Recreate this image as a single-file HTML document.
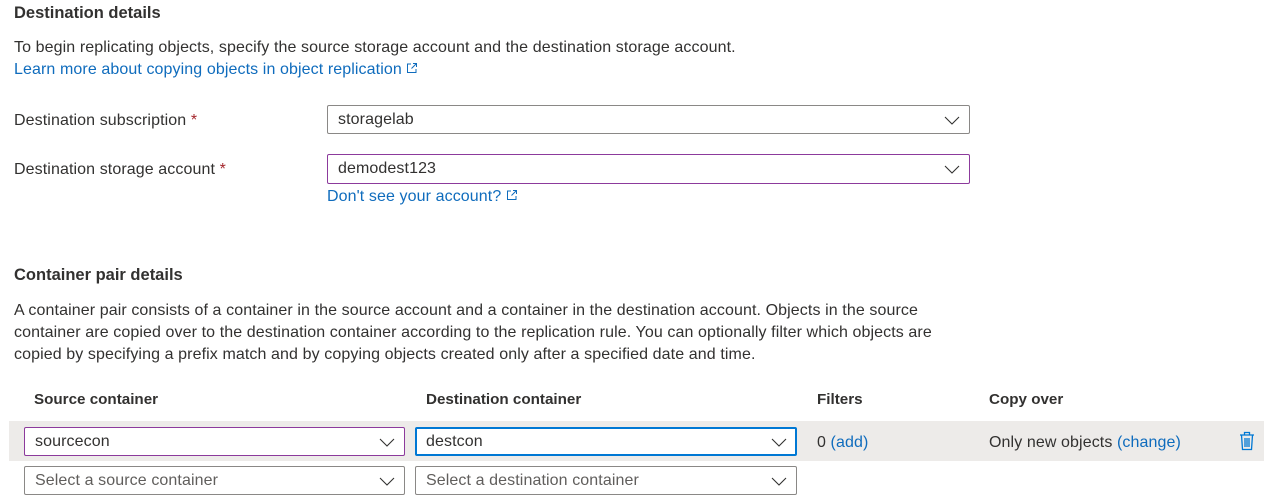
<!DOCTYPE html>
<html><head><style>
body{margin:0;width:1269px;height:498px;background:#fff;font-family:"Liberation Sans",sans-serif;color:#323130;position:relative;overflow:hidden;font-size:16px;letter-spacing:0.1px}
.a{position:absolute;white-space:nowrap;line-height:20px}
.h{font-size:16.5px;font-weight:bold;color:#323130;letter-spacing:0}
.b{font-weight:bold;font-size:15.2px;letter-spacing:0}
.l{color:#0f6cbd}
.r{color:#a4262c}
.box{position:absolute;box-sizing:border-box;border:1px solid #8a8886;border-radius:2px;background:#fff}
.box span{position:absolute;left:10px;top:50%;transform:translateY(-50%);white-space:nowrap}
.box svg{position:absolute;right:9px;top:50%;margin-top:-6px}
.p{border-color:#8c3a9c}
.ph{color:#605e5c}
</style></head><body>
<div class="a h" style="left:14px;top:3px">Destination details</div>
<div class="a" style="left:14px;top:38px">To begin replicating objects, specify the source storage account and the destination storage account.</div>
<div class="a l" style="left:14px;top:60px">Learn more about copying objects in object replication <svg width="12" height="12" viewBox="0 0 12 12"><path d="M5 2H1.5v8.5H10V7M7 1.5h3.5V5M10.5 1.5 5.5 6.5" fill="none" stroke="#0f6cbd" stroke-width="1"/></svg></div>
<div class="a" style="left:14px;top:111px">Destination subscription <span class="r">*</span></div>
<div class="box" style="left:327px;top:105px;width:643px;height:29px"><span>storagelab</span><svg width="16" height="12"><path d="M1 3l7 7 7-7" fill="none" stroke="#323130" stroke-width="1.1"/></svg></div>
<div class="a" style="left:14px;top:160px">Destination storage account <span class="r">*</span></div>
<div class="box p" style="left:327px;top:154px;width:643px;height:30px"><span>demodest123</span><svg width="16" height="12"><path d="M1 3l7 7 7-7" fill="none" stroke="#323130" stroke-width="1.1"/></svg></div>
<div class="a l" style="left:327px;top:187px">Don't see your account? <svg width="12" height="12" viewBox="0 0 12 12"><path d="M5 2H1.5v8.5H10V7M7 1.5h3.5V5M10.5 1.5 5.5 6.5" fill="none" stroke="#0f6cbd" stroke-width="1"/></svg></div>
<div class="a h" style="left:14px;top:265px">Container pair details</div>
<div class="a" style="left:14px;top:300px;line-height:22px">A container pair consists of a container in the source account and a container in the destination account. Objects in the source<br>container are copied over to the destination container according to the replication rule. You can optionally filter which objects are<br>copied by specifying a prefix match and by copying objects created only after a specified date and time.</div>
<div class="a b" style="left:34px;top:390px">Source container</div>
<div class="a b" style="left:426px;top:390px">Destination container</div>
<div class="a b" style="left:817px;top:390px">Filters</div>
<div class="a b" style="left:989px;top:390px">Copy over</div>
<div style="position:absolute;left:9px;top:421px;width:1255px;height:40px;background:#edebe9"></div>
<div class="box p" style="left:24px;top:427px;width:381px;height:29px"><span>sourcecon</span><svg width="16" height="12"><path d="M1 3l7 7 7-7" fill="none" stroke="#323130" stroke-width="1.1"/></svg></div>
<div class="box" style="left:415px;top:427px;width:382px;height:29px;border:2px solid #0078d4"><span style="left:9px">destcon</span><svg width="16" height="12" style="right:8px"><path d="M1 3l7 7 7-7" fill="none" stroke="#323130" stroke-width="1.1"/></svg></div>
<div class="a" style="left:817px;top:433px">0 <span class="l">(add)</span></div>
<div class="a" style="left:989px;top:433px">Only new objects <span class="l">(change)</span></div>
<svg style="position:absolute;left:1239px;top:431px" width="16" height="20" viewBox="0 0 16 20"><path d="M1 4h14M5.5 4V1.5h5V4M2.5 4l1 14.5h9l1-14.5M6 7v9M8 7v9M10 7v9" fill="none" stroke="#0078d4" stroke-width="1.3"/></svg>
<div class="box" style="left:24px;top:466px;width:381px;height:29px"><span class="ph">Select a source container</span><svg width="16" height="12"><path d="M1 3l7 7 7-7" fill="none" stroke="#323130" stroke-width="1.1"/></svg></div>
<div class="box" style="left:415px;top:466px;width:382px;height:29px"><span class="ph">Select a destination container</span><svg width="16" height="12"><path d="M1 3l7 7 7-7" fill="none" stroke="#323130" stroke-width="1.1"/></svg></div>
</body></html>
